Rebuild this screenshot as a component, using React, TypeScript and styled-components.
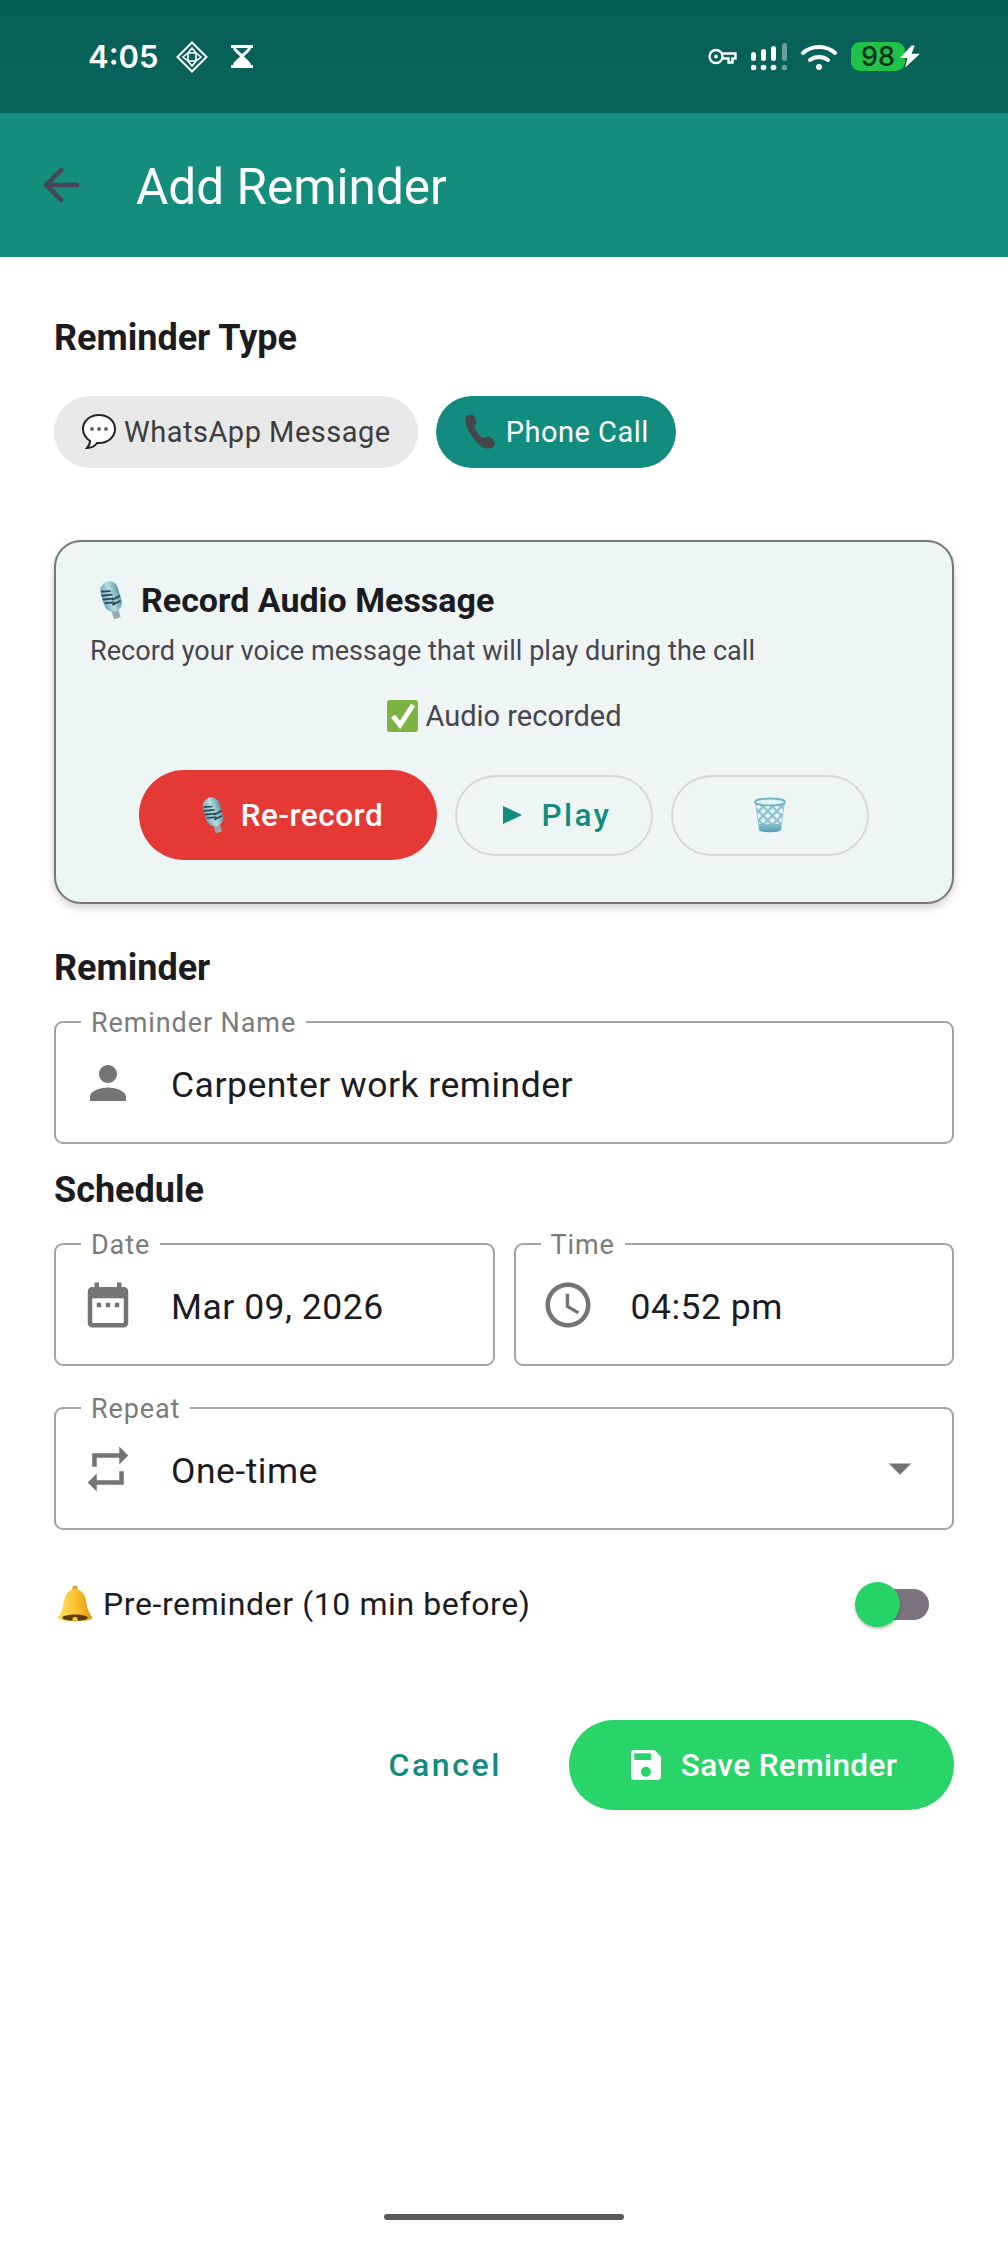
import styled, { createGlobalStyle } from 'styled-components'
import { MdAccessTime, MdArrowBack, MdArrowDropDown, MdDateRange, MdPerson, MdRepeat, MdSave } from 'react-icons/md'
import type { ReactNode } from 'react'

const GlobalStyle = createGlobalStyle`
  html, body {
    margin: 0;
    padding: 0;
    background: #fff;
    font-family: Roboto, "Noto Sans", sans-serif;
  }
  * { box-sizing: border-box; }
`

const Page = styled.div`
  width: 1008px;
  height: 2244px;
  display: flex;
  flex-direction: column;
  background: #fff;
  overflow: hidden;
`

// status bar
const StatusBar = styled.div`
  height: 113px;
  flex: none;
  display: flex;
  align-items: center;
  justify-content: space-between;
  padding: 0 88px;
  background: linear-gradient(#065f57, #07635a);
  color: #fff;
`

const StatusGroup = styled.div<{ $gap: number }>`
  display: flex;
  align-items: center;
  gap: ${(p) => p.$gap}px;
`

const Clock = styled.span`
  font-family: Inter, Roboto, sans-serif;
  font-size: 31px;
  font-weight: 600;
  line-height: 40px;
  width: 69px;
  white-space: nowrap;
`

const HourglassSlot = styled.span`
  display: flex;
  margin-left: 4px;
`

const Battery = styled.div`
  width: 54px;
  height: 29px;
  border-radius: 9px;
  background: #20c24a;
  color: #06301a;
  font-family: Inter, Roboto, sans-serif;
  font-size: 27px;
  font-weight: 500;
  line-height: 29px;
  text-align: center;
  margin-right: -5px;
`

const BatteryWrap = styled.div`
  display: flex;
  align-items: center;
`

// app bar
const AppBar = styled.div`
  height: 144px;
  flex: none;
  display: flex;
  align-items: center;
  padding-left: 34px;
  background: #148d7d;
`

const BackIcon = styled(MdArrowBack)`
  flex: none;
  color: #4a4458;
`

const AppTitle = styled.div`
  margin-left: 48px;
  margin-top: 3px;
  font-size: 49.5px;
  line-height: 60px;
  color: #fff;
`

const Content = styled.div`
  padding: 0 54px;
  display: flex;
  flex-direction: column;
`

const Heading = styled.div<{ $top: number }>`
  margin-top: ${(p) => p.$top}px;
  font-size: 36px;
  font-weight: 700;
  line-height: 44px;
  color: #1c1b1f;
`

const ChipRow = styled.div`
  margin-top: 36px;
  display: flex;
  gap: 18px;
`

const Chip = styled.div<{ $active?: boolean }>`
  height: 72px;
  padding: 0 27px;
  border-radius: 36px;
  display: flex;
  align-items: center;
  gap: 7px;
  font-size: 29px;
  letter-spacing: 0.5px;
  white-space: nowrap;
  background: ${(p) => (p.$active ? '#128c7e' : '#e8e8e8')};
  color: ${(p) => (p.$active ? '#fff' : '#3d3d3d')};
`

// record audio card
const Card = styled.div`
  margin-top: 72px;
  height: 364px;
  padding: 36px 34px 0;
  border: 2px solid #767676;
  border-radius: 27px;
  background: #eef5f5;
  box-shadow: 0 4px 9px rgba(0, 0, 0, 0.18);
  display: flex;
  flex-direction: column;
`

const CardTitle = styled.div`
  display: flex;
  align-items: center;
  gap: 7px;
  font-size: 34px;
  font-weight: 700;
  line-height: 44px;
  color: #1c1b1f;
`

const CardText = styled.div`
  margin-top: 11px;
  font-size: 27px;
  line-height: 36px;
  letter-spacing: 0.05px;
  color: #49454f;
`

const CardStatus = styled.div`
  margin-top: 27px;
  display: flex;
  align-items: center;
  justify-content: center;
  gap: 6px;
  font-size: 29px;
  line-height: 40px;
  color: #49454f;
`

const ActionRow = styled.div`
  margin-top: 34px;
  display: flex;
  align-items: center;
  justify-content: center;
  gap: 18px;
`

const RecordButton = styled.div`
  width: 298px;
  height: 90px;
  border-radius: 45px;
  background: #e53935;
  color: #fff;
  display: flex;
  align-items: center;
  justify-content: center;
  gap: 6px;
  font-size: 31.5px;
  font-weight: 500;
  letter-spacing: 0.5px;
`

const OutlineButton = styled.div<{ $nudge?: number }>`
  width: 198px;
  height: 81px;
  padding-left: ${(p) => p.$nudge ?? 0}px;
  border-radius: 41px;
  border: 2px solid #d4dada;
  color: #128c7e;
  display: flex;
  align-items: center;
  justify-content: center;
  gap: 20px;
  font-size: 31.5px;
  font-weight: 500;
  letter-spacing: 2.4px;
`

// outlined text fields
const FieldRow = styled.div<{ $top: number }>`
  margin-top: ${(p) => p.$top}px;
  display: flex;
  gap: 19px;
`

const FieldBox = styled.div`
  position: relative;
  flex: 1;
  height: 123px;
  padding: 0 25px;
  display: flex;
  align-items: center;
  border: 2px solid #a3a3a3;
  border-radius: 9px;
  color: #747474;
`

const FieldLabel = styled.span`
  position: absolute;
  top: -16px;
  left: 25px;
  padding: 0 10px;
  background: #fff;
  font-size: 27px;
  line-height: 32px;
  letter-spacing: 0.9px;
  color: #7b7b7b;
`

const FieldValue = styled.span`
  flex: 1;
  margin-left: 36px;
  margin-top: 4px;
  font-size: 35.5px;
  letter-spacing: 0.5px;
  color: #1c1b1f;
  white-space: nowrap;
`

const DropIcon = styled(MdArrowDropDown)`
  flex: none;
  margin-top: -2px;
`

const PreRow = styled.div`
  margin-top: 51px;
  height: 46px;
  display: flex;
  align-items: center;
  gap: 9px;
  font-size: 32px;
  letter-spacing: 0.6px;
  color: #1c1b1f;
`

const Toggle = styled.div`
  position: relative;
  width: 69px;
  height: 31px;
  margin-left: auto;
  margin-right: 25px;
  border-radius: 16px;
  background: #79747e;
`

const ToggleKnob = styled.span`
  position: absolute;
  left: -5px;
  top: -7px;
  width: 45px;
  height: 45px;
  border-radius: 50%;
  background: #25d366;
  box-shadow: 0 2px 3px rgba(0, 0, 0, 0.25);
`

const ButtonRow = styled.div`
  margin-top: 93px;
  display: flex;
  align-items: center;
  justify-content: flex-end;
`

const CancelButton = styled.div`
  margin-right: 67px;
  font-size: 32px;
  font-weight: 500;
  letter-spacing: 2.6px;
  color: #128c7e;
`

const SaveButton = styled.div`
  width: 385px;
  height: 90px;
  border-radius: 45px;
  background: #29d469;
  color: #fff;
  display: flex;
  align-items: center;
  justify-content: center;
  gap: 15px;
  font-size: 31.5px;
  font-weight: 500;
  letter-spacing: 0.4px;
`

const HomeBar = styled.div`
  width: 240px;
  height: 6px;
  flex: none;
  margin: auto auto 24px;
  border-radius: 3px;
  background: #5a5a5a;
`

// emoji drawings
const Bubble = () => (
  <svg width="36" height="38" viewBox="0 0 36 38">
    <path d="M18 2C9 2 2 8 2 16c0 5 3 9 7 12 0 2-1 5-3 7 4 0 8-2 10-5h2c9 0 16-6 16-14S27 2 18 2z" fill="#fff" stroke="#222" strokeWidth="2" />
    <circle cx="11" cy="16" r="2" fill="#666" />
    <circle cx="18" cy="16" r="2" fill="#666" />
    <circle cx="25" cy="16" r="2" fill="#666" />
  </svg>
)

const PhoneGlyph = () => (
  <svg width="36" height="38" viewBox="0 0 36 38">
    <path d="M3 4c2-3 6-3 8-1 2 3 3 6 2 8l-2 2c1 4 5 10 9 12l3-1c3-1 6 1 8 4 2 3 0 6-3 7-5 2-11-1-17-9C5 18 1 10 3 4z" fill="#47454c" />
  </svg>
)

const Mic = ({ id, size }: { id: string; size: number }) => (
  <svg width={size * 1.1} height={size} viewBox="0 0 44 40">
    <defs>
      <linearGradient id={id} x1="0" x2="1" y1="0" y2="0">
        <stop offset="0" stopColor="#6ea9b8" />
        <stop offset="0.5" stopColor="#b5dde4" />
        <stop offset="1" stopColor="#5f98a8" />
      </linearGradient>
    </defs>
    <g transform="rotate(-16 22 20)">
      <rect x="18.500" y="29" width="7" height="10" fill="#9aa9ac" />
      <rect x="13" y="1" width="18" height="31" rx="9" fill={`url(#${id})`} />
      <path d="M14 9l9 2M13 13l11 2M13 17l11 2M14 21l10 2M21 25l9-2M22 20l9-2" stroke="#2b4a55" strokeWidth="1.800" />
    </g>
  </svg>
)

const CheckBox = () => (
  <svg width="33" height="32" viewBox="0 0 33 32">
    <rect x="1" y="0" width="31" height="32" rx="3" fill="#7cb342" />
    <path d="M7 16l7 9L27 5" fill="none" stroke="#fff" strokeWidth="5" />
  </svg>
)

const Trash = () => (
  <svg width="32" height="36" viewBox="0 0 32 36">
    <defs>
      <linearGradient id="binFill" x1="0" x2="0" y1="0" y2="1">
        <stop offset="0" stopColor="#8cc5d0" />
        <stop offset="0.7" stopColor="#8cc5d0" />
        <stop offset="1" stopColor="#4f9fb0" />
      </linearGradient>
      <pattern id="binMesh" width="6.500" height="6.500" patternUnits="userSpaceOnUse" patternTransform="rotate(45)">
        <rect x="1.500" y="1.500" width="4" height="4" fill="#f4fbfc" />
      </pattern>
    </defs>
    <path d="M1 5h30l-4 28c-1 3-21 3-22 0z" fill="url(#binFill)" />
    <path d="M2 8h28l-3 19H5z" fill="url(#binMesh)" />
    <ellipse cx="16" cy="5" rx="15" ry="3.500" fill="#e4f2f5" stroke="#76b3c0" strokeWidth="2" />
  </svg>
)

const Bell = () => (
  <svg width="40" height="40" viewBox="2 0 36 38">
    <defs>
      <linearGradient id="bellFill" x1="0" x2="1" y1="0" y2="0">
        <stop offset="0" stopColor="#ffdf5e" />
        <stop offset="0.55" stopColor="#fbc02d" />
        <stop offset="1" stopColor="#d99a12" />
      </linearGradient>
    </defs>
    <circle cx="21" cy="4" r="2.500" fill="#e0a41c" />
    <path d="M21 5c7 0 10 6 11 14 1 6 3 9 5 12 1 3-3 4-16 4S4 34 5 31c2-3 4-6 5-12 1-8 4-14 11-14z" fill="url(#bellFill)" />
    <ellipse cx="21" cy="32" rx="12" ry="3" fill="#5d3a10" />
    <circle cx="21" cy="33.500" r="2.500" fill="#f4c22b" />
  </svg>
)

// status bar drawings
const GridDiamond = () => (
  <svg width="32" height="32" viewBox="0 0 32 32" fill="none" stroke="#fff" strokeWidth="2">
    <path d="M16 1.500L30.500 16 16 30.500 1.500 16z" />
    <path d="M16 7l4 5h-8zM16 25l4-5h-8zM7 16l5-4v8zM25 16l-5-4v8z" strokeWidth="1.600" />
  </svg>
)

const Hourglass = () => (
  <svg width="22" height="23" viewBox="0 0 22 23">
    <path d="M0 0h22v3h-2c-1 4-5 6-7 8.500 2 2.500 6 4.500 7 8.500h2v3H0v-3h2c1-4 5-6 7-8.500C7 9 3 7 2 3H0z" fill="#fff" />
    <path d="M5 3h12c-1 2-4 4-6 6-2-2-5-4-6-6z" fill="#07625a" />
  </svg>
)

const KeyIcon = () => (
  <svg width="29" height="17" viewBox="0 0 29 17" fill="none" stroke="#fff" strokeWidth="2.400">
    <circle cx="8" cy="8.500" r="6.500" />
    <circle cx="8" cy="8.500" r="1.500" fill="#fff" strokeWidth="1" />
    <path d="M14 5.500h13.500v5h-3v4h-4v-4H14" />
  </svg>
)

const SignalIcon = () => (
  <svg width="36" height="28" viewBox="0 0 36 28">
    <rect x="0" y="9" width="5" height="9" rx="2.500" fill="#fff" />
    <rect x="10" y="6" width="5" height="12" rx="2.500" fill="#fff" />
    <rect x="20" y="3" width="5" height="15" rx="2.500" fill="#fff" />
    <rect x="31" y="0" width="5" height="18" rx="2.500" fill="#fff" opacity="0.4" />
    <circle cx="2.500" cy="24.500" r="2.800" fill="#fff" />
    <circle cx="12.500" cy="24.500" r="2.800" fill="#fff" />
    <circle cx="22.500" cy="24.500" r="2.800" fill="#fff" />
    <circle cx="33.500" cy="24.500" r="2.800" fill="#fff" opacity="0.4" />
  </svg>
)

const WifiIcon = () => (
  <svg width="36" height="27" viewBox="0 0 36 27" fill="none" stroke="#fff" strokeWidth="4" strokeLinecap="round">
    <path d="M2 10c9-8 23-8 32 0" />
    <path d="M9 17c5-4 13-4 18 0" />
    <circle cx="18" cy="24" r="3" fill="#fff" stroke="none" />
  </svg>
)

const BoltIcon = () => (
  <svg width="20" height="23" viewBox="0 0 19 21">
    <path d="M11 0L0 12h7l-2 9 14-13h-8l3-8z" fill="#fff" />
  </svg>
)

const Field = ({ label, value, icon, children }: { label: string; value: string; icon: ReactNode; children?: ReactNode }) => (
  <FieldBox>
    <FieldLabel>{label}</FieldLabel>
    {icon}
    <FieldValue>{value}</FieldValue>
    {children}
  </FieldBox>
)

const App = () => {
  return (
    <Page>
      <GlobalStyle />
      <StatusBar>
        <StatusGroup $gap={19}>
          <Clock>4:05</Clock>
          <GridDiamond />
          <HourglassSlot><Hourglass /></HourglassSlot>
        </StatusGroup>
        <StatusGroup $gap={14}>
          <KeyIcon />
          <SignalIcon />
          <WifiIcon />
          <BatteryWrap>
            <Battery>98</Battery>
            <BoltIcon />
          </BatteryWrap>
        </StatusGroup>
      </StatusBar>

      <AppBar>
        <BackIcon size={54} />
        <AppTitle>Add Reminder</AppTitle>
      </AppBar>

      <Content>
        <Heading $top={59}>Reminder Type</Heading>
        <ChipRow>
          <Chip><Bubble />WhatsApp Message</Chip>
          <Chip $active><PhoneGlyph />Phone Call</Chip>
        </ChipRow>

        <Card>
          <CardTitle><Mic id="micTitle" size={40} />Record Audio Message</CardTitle>
          <CardText>Record your voice message that will play during the call</CardText>
          <CardStatus><CheckBox />Audio recorded</CardStatus>
          <ActionRow>
            <RecordButton><Mic id="micButton" size={38} />Re-record</RecordButton>
            <OutlineButton $nudge={6}>
              <svg width="19" height="18" viewBox="0 0 19 18"><path d="M0 0l19 9-19 9z" fill="#128c7e" /></svg>
              Play
            </OutlineButton>
            <OutlineButton><Trash /></OutlineButton>
          </ActionRow>
        </Card>

        <Heading $top={42}>Reminder</Heading>
        <FieldRow $top={31}>
          <Field label="Reminder Name" value="Carpenter work reminder" icon={<MdPerson size={54} />} />
        </FieldRow>

        <Heading $top={24}>Schedule</Heading>
        <FieldRow $top={31}>
          <Field label="Date" value="Mar 09, 2026" icon={<MdDateRange size={54} />} />
          <Field label="Time" value="04:52 pm" icon={<MdAccessTime size={54} />} />
        </FieldRow>
        <FieldRow $top={41}>
          <Field label="Repeat" value="One-time" icon={<MdRepeat size={54} />}>
            <DropIcon size={54} />
          </Field>
        </FieldRow>

        <PreRow>
          <Bell />
          Pre-reminder (10 min before)
          <Toggle><ToggleKnob /></Toggle>
        </PreRow>

        <ButtonRow>
          <CancelButton>Cancel</CancelButton>
          <SaveButton><MdSave size={40} />Save Reminder</SaveButton>
        </ButtonRow>
      </Content>

      <HomeBar />
    </Page>
  )
}

export default App
